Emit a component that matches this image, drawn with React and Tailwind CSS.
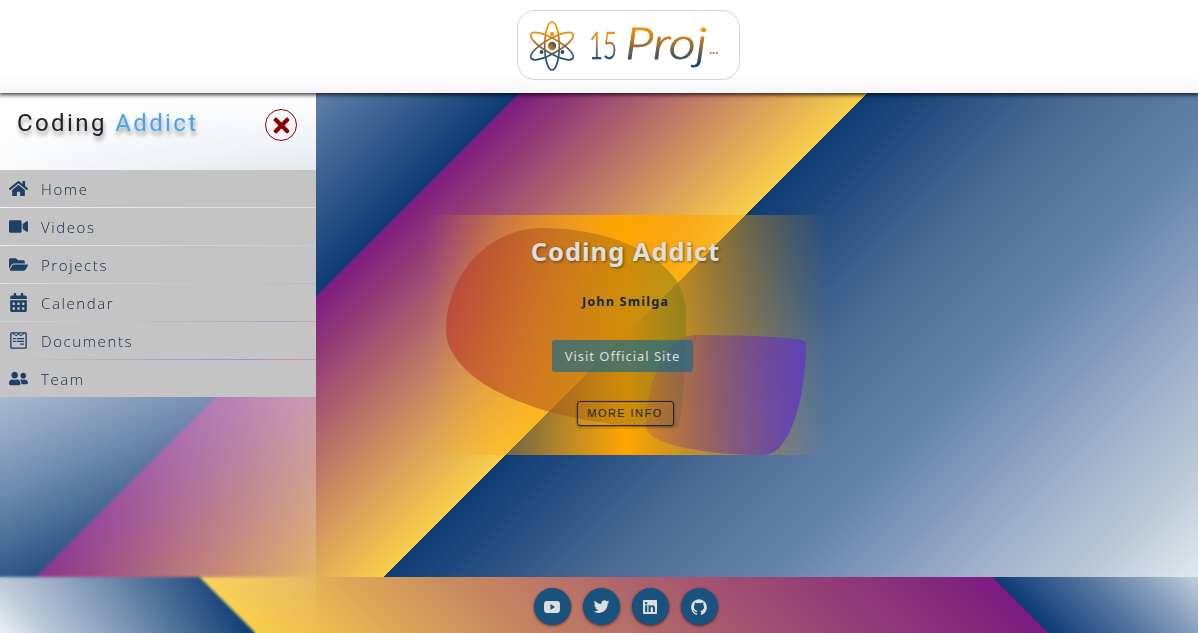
import React from "react";
import { FaHome, FaVideo, FaFolderOpen, FaCalendarAlt, FaWpforms, FaUserFriends, FaTimes, FaLinkedin } from "react-icons/fa";
import { IoLogoYoutube, IoLogoTwitter, IoLogoGithub } from "react-icons/io";

const links = [
  { label: "Home", Icon: FaHome },
  { label: "Videos", Icon: FaVideo },
  { label: "Projects", Icon: FaFolderOpen },
  { label: "Calendar", Icon: FaCalendarAlt },
  { label: "Documents", Icon: FaWpforms },
  { label: "Team", Icon: FaUserFriends },
];

const socials = [
  { name: "youtube", Icon: IoLogoYoutube, size: 16 },
  { name: "twitter", Icon: IoLogoTwitter, size: 17 },
  { name: "linkedin", Icon: FaLinkedin, size: 16 },
  { name: "github", Icon: IoLogoGithub, size: 18 },
];

function Logo() {
  return (
    <svg width="221" height="68" viewBox="0 0 221 68" fill="none">
      <defs>
        <linearGradient id="atom" gradientUnits="userSpaceOnUse" x1="0" y1="0" x2="0" y2="52">
          <stop offset="0.25" stopColor="#f48c06" />
          <stop offset="0.75" stopColor="#1d4b73" />
        </linearGradient>
        <linearGradient id="core" x1="1" y1="0" x2="0" y2="1">
          <stop offset="0.1" stopColor="#1d4b73" />
          <stop offset="0.9" stopColor="#f48c06" />
        </linearGradient>
        <linearGradient id="digits" gradientUnits="userSpaceOnUse" x1="0" y1="21" x2="0" y2="48">
          <stop offset="0.15" stopColor="#f48c06" />
          <stop offset="0.9" stopColor="#1d4b73" />
        </linearGradient>
        <linearGradient id="word" gradientUnits="userSpaceOnUse" x1="0" y1="16" x2="0" y2="58">
          <stop offset="0.1" stopColor="#f48c06" />
          <stop offset="0.9" stopColor="#12427a" />
        </linearGradient>
      </defs>
      <g transform="translate(11 9)">
        <g stroke="url(#atom)" strokeWidth="1.700">
          <path d="M23 2C27 2 30.300 12.700 30.300 26S27 50 23 50S15.700 39.300 15.700 26S19 2 23 2Z" />
          <path d="M2 14C4 10.300 14.500 13 26 19.500S46 34 44 38S31.500 39 20 32.500S0 18 2 14Z" />
          <path d="M44 14C42 10.300 31.500 13 20 19.500S0 34 2 38S14.500 39 26 32.500S46 18 44 14Z" />
        </g>
        <circle cx="23" cy="26" r="4.200" fill="url(#core)" />
        <circle cx="23" cy="14" r="2" fill="#f48c06" />
        <circle cx="12.500" cy="32" r="1.900" fill="#1d4b73" />
        <circle cx="33.500" cy="32" r="1.900" fill="#1d4b73" />
      </g>
      <text x="71" y="48" textLength="28" lengthAdjust="spacingAndGlyphs" fill="url(#digits)" stroke="url(#digits)" strokeWidth="0.700" className="font-[Lato,sans-serif] text-[38px] font-light">15</text>
      <text x="107" y="48" textLength="82" lengthAdjust="spacingAndGlyphs" fill="url(#word)" stroke="url(#word)" strokeWidth="0.900" className="font-[Lato,sans-serif] text-[44px] font-light italic">Proj</text>
      <text x="191" y="43" fill="#b37632" className="font-[Lato,sans-serif] text-[13px] font-bold">...</text>
    </svg>
  );
}

function Header() {
  return (
    <header className="relative z-20 flex h-[93px] justify-center bg-gradient-to-b from-white from-80% to-[#f5f4f6] pt-[10px] pl-[59px] shadow-[0_1px_4px_1px_rgba(0,0,0,0.75)]">
      <div className="flex h-[70px] w-[223px] items-center rounded-[18px] border border-[#d3d3d3] bg-white">
        <Logo />
      </div>
    </header>
  );
}

function Sidebar() {
  return (
    <aside className="absolute top-[93px] left-0 z-10 h-[540px] w-[316px] bg-gradient-to-b from-white to-transparent backdrop-blur-[1.5px]">
      <div className="flex h-[77px] justify-between pt-[16px] pr-[19px] pl-[17px]">
        <h2 className="font-[Roboto,sans-serif] text-[24px] leading-[28px] tracking-[2.400px] text-[#222] [text-shadow:1px_4px_4px_rgba(0,0,0,0.4)]">
          Coding <span className="text-[#49a6e9]">Addict</span>
        </h2>
        <button className="flex size-8 items-center justify-center rounded-full border border-[#8b0000] text-[#8b0000]">
          <FaTimes size={23} />
        </button>
      </div>
      <nav className="flex flex-col gap-px">
        {links.map(({ label, Icon }) => (
          <a key={label} className="flex h-[37px] items-center gap-[13px] bg-[#c4c4c4] pl-[9px] text-[#1d4067]">
            <Icon size={19} />
            <span className="pt-px font-['Open_Sans','Noto_Sans',sans-serif] text-[15px] leading-[22px] font-light tracking-[1.600px] text-[#10294a]">{label}</span>
          </a>
        ))}
      </nav>
    </aside>
  );
}

function Card() {
  return (
    <section className="relative mt-[122px] ml-[426px] h-[240px] w-[400px] bg-[linear-gradient(90deg,transparent,orange,transparent)]">
      <div className="absolute top-[13px] left-[20px] h-[200px] w-[240px] rounded-[40%_60%_4%_96%/51%_41%_59%_49%] bg-[linear-gradient(90deg,rgba(190,50,40,0.6),rgba(160,115,16,0.5)_75%,rgba(110,125,26,0.5))]" />
      <div className="absolute top-[120px] left-[220px] h-[120px] w-[160px] rounded-[31%_69%_26%_74%/77%_6%_94%_23%] bg-[linear-gradient(90deg,rgba(175,85,80,0.35),rgba(130,65,130,0.55)_40%,rgba(96,55,195,0.8))]" />
      <div className="relative flex h-full flex-col items-center font-['Noto_Sans','Open_Sans',sans-serif]">
        <h1 className="mt-[17px] mr-[1px] text-[25.500px] leading-[38px] font-bold tracking-[0.950px] whitespace-nowrap text-[#dedede] [text-shadow:1px_1px_3px_rgba(0,0,0,0.5)]">Coding Addict</h1>
        <h4 className="mt-[22px] mr-[1px] text-[12.600px] leading-[20px] font-bold tracking-[1.200px] text-[#10294a]">John Smilga</h4>
        <a className="mt-[28px] -ml-[7px] flex h-[32px] w-[141px] items-center justify-center rounded-[3px] bg-[#14688f]/65 pt-px text-[13px] tracking-[0.950px] whitespace-nowrap text-[#dedede]">Visit Official Site</a>
        <button className="mt-[29px] mr-[2px] flex h-[25px] w-[97px] items-center justify-center rounded-[3px] border border-[#222] font-['Liberation_Sans',sans-serif] text-[11px] tracking-[1.450px] text-[#222] shadow-[0_1px_3px_rgba(0,0,0,0.4)]">MORE INFO</button>
      </div>
    </section>
  );
}

export default function App() {
  return (
    <div className="relative h-[633px] w-full overflow-hidden">
      <Header />
      <main className="flex h-[484px] bg-[linear-gradient(135deg,#ffffff_0%,#9fb0ca_10%,#5f7fa8_19%,#0d3b74_30.860%,#7b1b80_30.860%,#b56d6a_40%,#f9cf4a_51.550%,#0d3b74_51.550%,#4a6a93_64%,#6685ab_75%,#9dafc9_86%,#b9c8d5_93%,#e0e7ee_100%)]">
        <Card />
      </main>
      <footer className="flex h-[56px] justify-center gap-[12px] bg-[linear-gradient(225deg,#c2cedb_0%,#8fa5c0_4%,#5576a0_9%,#0d3b74_16.350%,#7b1b80_16.350%,#a35470_40%,#c98b60_60%,#f9cf4a_79.600%,#0d3b74_79.600%,#7590af_89%,#9fb0ca_93%,#b9c8d5_96%,#edf1f7_100%)] pt-[11px] pl-[53px]">
        {socials.map(({ name, Icon, size }) => (
          <a key={name} aria-label={name} className="flex size-[37px] items-center justify-center rounded-full bg-[#19527c] text-[#dedede] shadow-[0_1px_3px_rgba(0,0,0,0.6)]">
            <Icon size={size} />
          </a>
        ))}
      </footer>
      <Sidebar />
    </div>
  );
}
